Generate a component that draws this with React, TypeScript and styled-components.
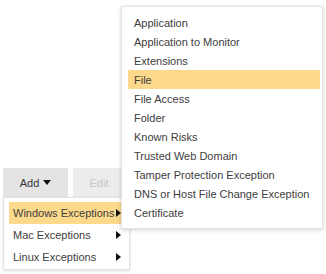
import styled, { createGlobalStyle } from "styled-components";

const GlobalStyle = createGlobalStyle`
  html, body {
    margin: 0;
    padding: 0;
    background: #ffffff;
    font-family: "Liberation Sans", Arial, sans-serif;
    font-size: 11px;
    color: #3d3d3d;
  }
`;

const Page = styled.div`
  padding: 168px 0 0 3px;
  height: 274px;
  box-sizing: border-box;
`;

const Toolbar = styled.div`
  position: relative;
  display: flex;
  gap: 5px;
`;

const ToolButton = styled.div<{ $disabled?: boolean; $width: number }>`
  width: ${(p) => p.$width}px;
  height: 29px;
  display: flex;
  align-items: center;
  justify-content: center;
  gap: 4px;
  background: ${(p) => (p.$disabled ? "#ececec" : "#e4e4e4")};
  color: ${(p) => (p.$disabled ? "#c4c4c4" : "#333333")};
  font-size: 11px;
`;

const Caret = styled.span`
  width: 0;
  height: 0;
  border-left: 4px solid transparent;
  border-right: 4px solid transparent;
  border-top: 5px solid #111;
  margin-top: -1px;
`;

const Dropdown = styled.div`
  position: absolute;
  top: 29px;
  left: 0;
  width: 127px;
  box-sizing: border-box;
  padding: 4px 5px 1px;
  background: #fff;
  border: 1px solid #e2e2e2;
  box-shadow: 0 1px 3px rgba(0, 0, 0, 0.12);
`;

const DropItem = styled.div<{ $active?: boolean }>`
  position: relative;
  height: 22px;
  display: flex;
  align-items: center;
  justify-content: space-between;
  padding: 0 3px 0 4px;
  background: ${(p) => (p.$active ? "#fdd98c" : "transparent")};
`;

const RightArrow = styled.span`
  width: 0;
  height: 0;
  border-top: 4px solid transparent;
  border-bottom: 4px solid transparent;
  border-left: 5px solid #111;
`;

const Submenu = styled.div`
  position: absolute;
  left: 112px;
  top: -196px;
  width: 202px;
  box-sizing: border-box;
  padding: 6px 2px 6px 6px;
  background: #fff;
  border: 1px solid #e4e4e4;
  box-shadow: 0 1px 4px rgba(0, 0, 0, 0.18);
  z-index: 2;
`;

const SubItem = styled.div<{ $active?: boolean }>`
  height: 19px;
  display: flex;
  align-items: center;
  padding: 1px 0 0 6px;
  box-sizing: border-box;
  white-space: nowrap;
  background: ${(p) => (p.$active ? "#fdd98c" : "transparent")};
`;

const subItems = [
  "Application",
  "Application to Monitor",
  "Extensions",
  "File",
  "File Access",
  "Folder",
  "Known Risks",
  "Trusted Web Domain",
  "Tamper Protection Exception",
  "DNS or Host File Change Exception",
  "Certificate",
];

export default function App() {
  return (
    <>
      <GlobalStyle />
      <Page>
        <Toolbar>
          <ToolButton $width={65}>
            Add <Caret />
          </ToolButton>
          <ToolButton $width={52} $disabled>
            Edit
          </ToolButton>
          <Dropdown>
            <DropItem $active>
              Windows Exceptions <RightArrow />
              <Submenu>
                {subItems.map((s) => (
                  <SubItem key={s} $active={s === "File"}>
                    {s}
                  </SubItem>
                ))}
              </Submenu>
            </DropItem>
            <DropItem>
              Mac Exceptions <RightArrow />
            </DropItem>
            <DropItem>
              Linux Exceptions <RightArrow />
            </DropItem>
          </Dropdown>
        </Toolbar>
      </Page>
    </>
  );
}
